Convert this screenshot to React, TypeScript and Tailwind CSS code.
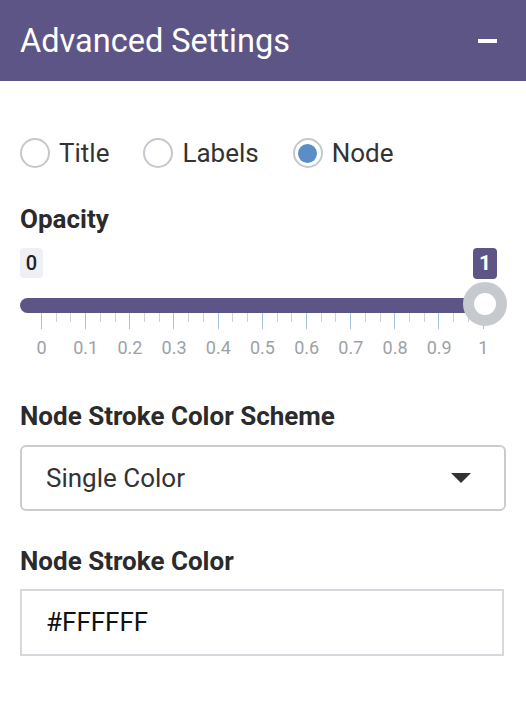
import { useState } from "react";

const options = ["Title", "Labels", "Node"];
const majorLabels = ["0", "0.1", "0.2", "0.3", "0.4", "0.5", "0.6", "0.7", "0.8", "0.9", "1"];

const RadioOption = ({
  label,
  checked,
  onSelect,
}: {
  label: string;
  checked: boolean;
  onSelect: () => void;
}) => (
  <button onClick={onSelect} className="flex items-center gap-[9px] text-[26px] leading-[30px] text-[#333]">
    <span className="flex size-[30px] items-center justify-center rounded-full border-2 border-[#c4c7cc] bg-white">
      {checked && <span className="size-[19px] rounded-full bg-[#5b8dc9]" />}
    </span>
    {label}
  </button>
);

const OpacitySlider = () => {
  const ticks = Array.from({ length: 31 }, (_, i) => i);
  return (
    <div className="w-[487px]">
      <div className="mt-[14px] flex justify-between pr-[10px]">
        <span className="flex h-[30px] w-[23px] items-center justify-center rounded-[4px] bg-[#eef0f3] text-[20px] font-medium text-[#222]">
          0
        </span>
        <span className="flex h-[31px] w-[24px] items-center justify-center rounded-[4px] bg-[#5e5587] text-[21px] font-bold text-white">
          1
        </span>
      </div>
      <div className="relative mt-[19px] h-[15px]">
        <div className="h-[15px] w-[465px] rounded-l-full bg-[#5e5587]" />
        <div className="absolute right-0 top-[-16px] size-[44px] rounded-full border-[11px] border-[#c6c9ce] bg-white" />
      </div>
      <div className="ml-[21px] flex h-[16px] w-[443px] items-start justify-between">
        {ticks.map((i) =>
          i % 3 === 0 ? (
            <span key={i} className="h-[16px] w-px bg-[#a9c2e2]" />
          ) : (
            <span key={i} className="h-[9px] w-px bg-[#cfd1d4]" />
          )
        )}
      </div>
      <div className="ml-[21px] mt-[8px] flex w-[443px] justify-between">
        {majorLabels.map((l) => (
          <span key={l} className="flex w-px justify-center">
            <span className="whitespace-nowrap text-[18px] leading-[21px] text-[#9da1a7]">{l}</span>
          </span>
        ))}
      </div>
    </div>
  );
};

export default function App() {
  const [selected, setSelected] = useState("Node");
  return (
    <div className="h-[706px] w-[526px] bg-white font-['Roboto',sans-serif]">
      <div className="flex h-[81px] items-center justify-between bg-[#5e5587] pl-[20px] pr-[29px] text-white">
        <span className="text-[32.5px] leading-[36px]">Advanced Settings</span>
        <span className="h-[4px] w-[19px] bg-white" />
      </div>
      <div className="px-[20px]">
        <div className="mt-[57px] flex items-center gap-[34px]">
          {options.map((o) => (
            <RadioOption key={o} label={o} checked={selected === o} onSelect={() => setSelected(o)} />
          ))}
        </div>
        <div className="mt-[36px] text-[26px] font-bold leading-[30px] text-[#2b2b2b]">Opacity</div>
        <OpacitySlider />
        <div className="mt-[43px] text-[26px] font-bold leading-[30px] text-[#2b2b2b]">
          Node Stroke Color Scheme
        </div>
        <div className="mt-[14px] flex h-[66px] w-[486px] items-center justify-between rounded-[6px] border-2 border-[#cccccc] pl-[24px] pr-[33px]">
          <span className="text-[26px] text-[#333]">Single Color</span>
          <svg width="20" height="10" viewBox="0 0 20 10">
            <path d="M0 0h20L10 10z" fill="#333" />
          </svg>
        </div>
        <div className="mt-[35px] text-[26px] font-bold leading-[30px] text-[#2b2b2b]">Node Stroke Color</div>
        <div className="mt-[13px] flex h-[67px] w-[484px] items-center border-2 border-[#d5d9de] pl-[24px]">
          <span className="text-[26px] text-[#111]">#FFFFFF</span>
        </div>
      </div>
    </div>
  );
}
